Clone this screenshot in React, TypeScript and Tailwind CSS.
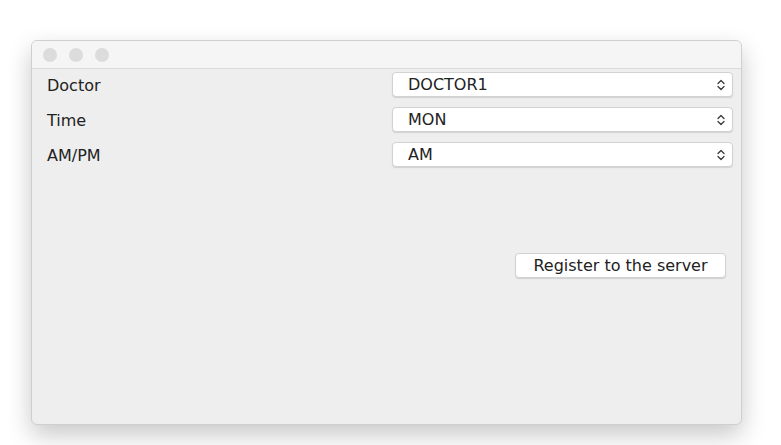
import React from "react";

const rows = [
  { label: "Doctor", value: "DOCTOR1" },
  { label: "Time", value: "MON" },
  { label: "AM/PM", value: "AM" },
];

function UpDown() {
  return (
    <svg width="10" height="14" viewBox="0 0 10 14" fill="none" className="text-[#3a3a3a]">
      <path d="M2 5.5 L5 2.5 L8 5.5" stroke="currentColor" strokeWidth="1.3" strokeLinecap="round" strokeLinejoin="round" />
      <path d="M2 8.5 L5 11.5 L8 8.5" stroke="currentColor" strokeWidth="1.3" strokeLinecap="round" strokeLinejoin="round" />
    </svg>
  );
}

function ComboBox({ value }: { value: string }) {
  return (
    <div className="flex h-[25px] w-[341px] items-center justify-between rounded-[4px] border border-[#d2d2d2] bg-white pl-[15px] pr-[6px] shadow-[0_1px_1px_rgba(0,0,0,0.12)]">
      <span className="pt-[1px] leading-none">{value}</span>
      <UpDown />
    </div>
  );
}

export default function App() {
  return (
    <div
      className="min-h-screen bg-white pl-[31px] pt-[40px] text-[16px] text-[#222]"
      style={{ fontFamily: '"DejaVu Sans", sans-serif' }}
    >
      {/* ventana */}
      <div className="flex h-[385px] w-[711px] flex-col overflow-hidden rounded-[6px] border border-[#cfcfcf] bg-[#eeeeee] shadow-[0_10px_24px_rgba(0,0,0,0.22)]">
        {/* barra de título */}
        <div className="flex h-[28px] items-center gap-[12px] border-b border-[#d9d9d9] bg-[#f5f5f5] pl-[11px]">
          <span className="h-[14px] w-[14px] rounded-full bg-[#dcdcdc]" />
          <span className="h-[14px] w-[14px] rounded-full bg-[#dcdcdc]" />
          <span className="h-[14px] w-[14px] rounded-full bg-[#dcdcdc]" />
        </div>

        <div className="flex flex-col gap-[10px] pl-[15px] pr-[8px] pt-[3px]">
          {rows.map((r) => (
            <div key={r.label} className="flex items-center justify-between">
              <span className="pt-[3px] leading-none">{r.label}</span>
              <ComboBox value={r.value} />
            </div>
          ))}
        </div>

        <div className="flex justify-end pr-[15px] pt-[86px]">
          <button className="flex h-[25px] w-[211px] items-center justify-center rounded-[4px] border border-[#d2d2d2] bg-white pt-[1px] leading-none text-[#222] shadow-[0_1px_1px_rgba(0,0,0,0.12)]">
            Register to the server
          </button>
        </div>
      </div>
    </div>
  );
}
